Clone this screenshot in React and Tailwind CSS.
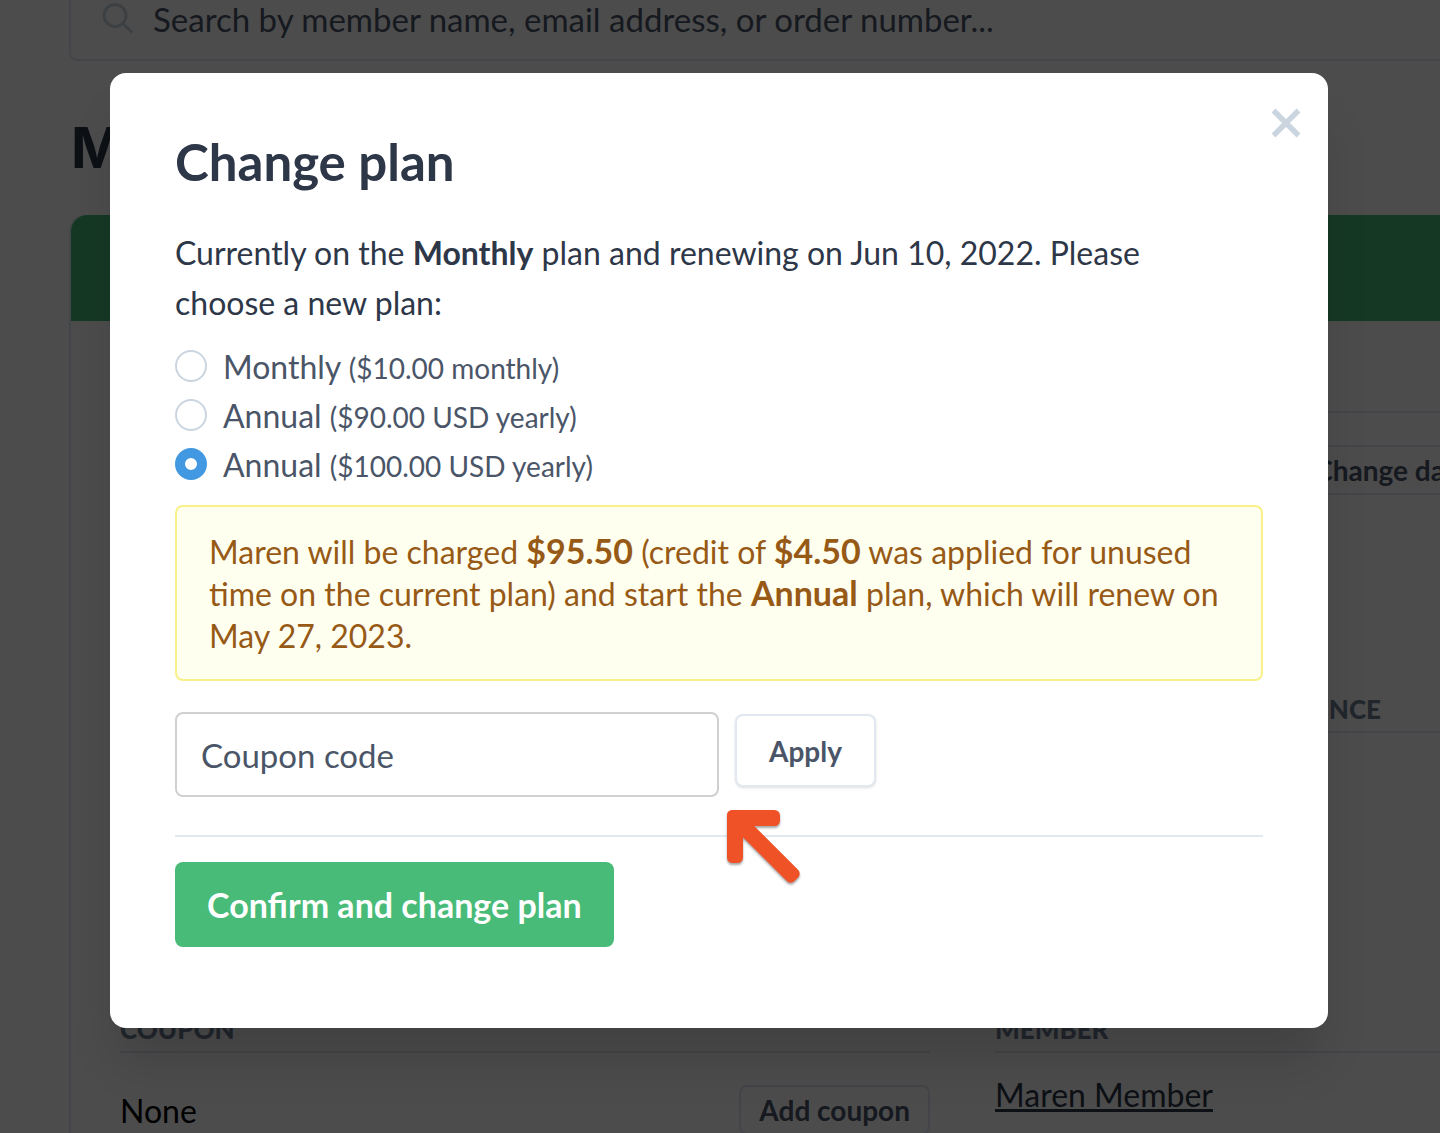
import { useState } from "react";

const plans = [
  { id: "monthly-10", name: "Monthly", price: "($10.00 monthly)" },
  { id: "annual-90", name: "Annual", price: "($90.00 USD yearly)" },
  { id: "annual-100", name: "Annual", price: "($100.00 USD yearly)" },
];

function SearchIcon() {
  return (
    <svg className="h-8 w-8 shrink-0 text-[#cbd5e0]" viewBox="0 0 32 32" fill="none" stroke="currentColor" strokeWidth="3" aria-hidden="true">
      <circle cx="14" cy="12.5" r="11" />
      <path d="M22 20.5 31 29.5" />
    </svg>
  );
}

function ArrowIcon() {
  return (
    <svg
      className="absolute left-full top-full z-10 ml-2 mt-3 h-20 w-20 overflow-visible fill-[#f05228] drop-shadow-[0_2px_1px_rgba(0,0,0,0.35)]"
      viewBox="0 0 80 80"
      aria-hidden="true"
    >
      <rect y="1" width="53" height="16" rx="5.5" />
      <rect y="1" width="16" height="53" rx="5.5" />
      <rect x="8" y="-8" width="90" height="16" rx="5.5" transform="translate(0 1) rotate(45)" />
    </svg>
  );
}

function SectionTitle({ children }) {
  return (
    <h2 className="border-b-2 border-[#e2e8f0] pb-1.5 text-[26px] leading-8 font-black text-[#718096] uppercase">
      {children}
    </h2>
  );
}

function MemberPage() {
  return (
    <div className="pl-[69px]">
      <label className="flex h-[61px] items-start rounded-bl-lg border-b-2 border-l-2 border-[#e2e8f0] pl-[30px]">
        <span className="pt-[3px]">
          <SearchIcon />
        </span>
        <input
          type="search"
          aria-label="Search"
          placeholder="Search by member name, email address, or order number..."
          className="h-10 min-w-0 flex-1 pl-5 text-[33px] outline-none placeholder:text-[#4a5568]"
        />
      </label>

      <h1 className="pt-[51px] pl-0.5 font-['Inter',sans-serif] text-[56px] leading-[72px] font-bold text-[#2d3748]">M</h1>

      <div className="mt-[31px] rounded-tl-2xl border-l-2 border-[#e2e8f0]">
        <div className="h-[106px] rounded-tl-2xl bg-[#48bb78]" />
        <div className="ml-[49px] h-[92px] border-b-2 border-[#e2e8f0]" />
        <div className="flex h-[113px] justify-end overflow-hidden pt-8">
          <button type="button" className="-mr-[50px] h-[50px] shrink-0 rounded-lg border-2 border-[#e2e8f0] px-[18px] text-[28px] font-bold whitespace-nowrap text-[#4a5568]">
            Change date
          </button>
        </div>
        <div className="ml-[49px] pt-[167px]">
          <h2 className="border-b-2 border-[#e2e8f0] pr-[59px] pb-1.5 text-right text-[26px] leading-8 font-black text-[#718096]">
            NCE
          </h2>
        </div>
        <div className="grid grid-cols-[810px_1fr] gap-[65px] pt-[280px] pl-[49px]">
          <section>
            <SectionTitle>Coupon</SectionTitle>
            <div className="flex items-start justify-between pt-8">
              <span className="pt-[6px] text-[32px] leading-10 text-black">None</span>
              <button type="button" className="h-[50px] rounded-lg border-2 border-[#e2e8f0] px-[18px] text-[28px] font-bold text-[#4a5568]">
                Add coupon
              </button>
            </div>
          </section>
          <section>
            <SectionTitle>Member</SectionTitle>
            <a href="#member" className="mt-[22px] inline-block text-[32px] leading-10 text-[#2d3748] underline">
              Maren Member
            </a>
          </section>
        </div>
      </div>
    </div>
  );
}

function ChangePlanModal() {
  const [plan, setPlan] = useState("annual-100");

  return (
    <div
      role="dialog"
      aria-modal="true"
      aria-labelledby="change-plan-title"
      className="relative w-full rounded-2xl bg-white px-[65px] pt-[61px] pb-[81px] shadow-[0_40px_50px_-10px_rgba(0,0,0,0.15)]"
    >
      <button type="button" aria-label="Close" className="absolute top-[35px] right-[27px] text-[#cbd5e0]">
        <svg className="h-[30px] w-[30px]" viewBox="0 0 30 30" stroke="currentColor" strokeWidth="5.5" aria-hidden="true">
          <path d="M2.5 2.5 27.5 27.5M27.5 2.5 2.5 27.5" />
        </svg>
      </button>

      <h2 id="change-plan-title" className="text-[51px] leading-[56px] font-bold text-[#2d3748]">
        Change plan
      </h2>
      <p className="mt-[38px] pr-16 text-[32px] leading-[50px] text-[#2d3748]">
        Currently on the <strong className="font-bold">Monthly</strong> plan and renewing on Jun 10, 2022. Please choose a new plan:
      </p>

      <fieldset className="mt-[13px] text-[#4a5568]">
        <legend className="sr-only">New plan</legend>
        {plans.map((item) => (
          <label key={item.id} className="flex h-[49px] items-center gap-4">
            <input
              type="radio"
              name="plan"
              value={item.id}
              checked={plan === item.id}
              onChange={() => setPlan(item.id)}
              className="h-8 w-8 shrink-0 appearance-none rounded-full border-2 border-[#cbd5e0] bg-white checked:border-[10px] checked:border-[#4299e1]"
            />
            <span className="pt-1 text-[32px] leading-10">
              {item.name} <span className="text-[28px]">{item.price}</span>
            </span>
          </label>
        ))}
      </fieldset>

      <p className="mt-[17px] rounded-lg border-2 border-[#faf089] bg-[#fffff0] px-8 pt-6 pb-[22px] text-[32px] leading-[42px] text-[#975a16]">
        Maren will be charged <strong className="text-[34px] leading-none font-bold">$95.50</strong> (credit of{" "}
        <strong className="text-[34px] leading-none font-bold">$4.50</strong> was applied for unused time on the current plan) and start
        the <strong className="text-[34px] leading-none font-bold">Annual</strong> plan, which will renew on May 27, 2023.
      </p>

      <div className="mt-[31px] flex items-start gap-4 border-b-2 border-[#e2e8f0] pb-[38px]">
        <div className="relative w-1/2">
          <input
            type="text"
            aria-label="Coupon code"
            placeholder="Coupon code"
            className="block h-[85px] w-full rounded-lg border-2 border-[#d0d0d0] px-6 text-[33px] outline-none placeholder:text-[#4a5568]"
          />
          <ArrowIcon />
        </div>
        <button type="button" className="mt-[2px] h-[73px] rounded-lg border-2 border-[#e2e8f0] bg-white px-8 text-[28px] font-bold text-[#4a5568] shadow-sm">
          Apply
        </button>
      </div>

      <button type="button" className="mt-[25px] h-[85px] rounded-lg bg-[#48bb78] px-8 text-[34px] font-bold text-white">
        Confirm and change plan
      </button>
    </div>
  );
}

export default function App() {
  return (
    <div className="relative h-screen overflow-hidden bg-white font-['Lato',sans-serif]">
      <MemberPage />
      <div className="absolute inset-0 bg-black/70 pt-[73px] pr-28 pl-[110px]">
        <ChangePlanModal />
      </div>
    </div>
  );
}
